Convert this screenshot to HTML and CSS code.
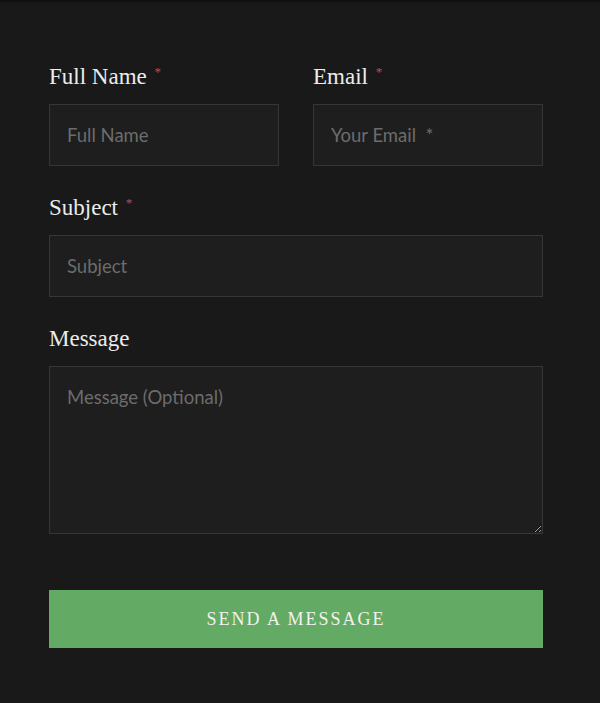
FILE: index.html
```html
<!DOCTYPE html>
<html>
<head>
<link rel="stylesheet" href="styles.css">
</head>
<body>

<form class="contact-form" action="#">
  <div class="row">
    <div class="field">
      <label for="fullname">Full Name <span class="req">*</span></label>
      <input type="text" id="fullname" name="fullname" placeholder="Full Name">
    </div>
    <div class="field">
      <label for="email">Email <span class="req">*</span></label>
      <input type="email" id="email" name="email" placeholder="Your Email  *">
    </div>
  </div>

  <div class="field">
    <label for="subject">Subject <span class="req">*</span></label>
    <input type="text" id="subject" name="subject" placeholder="Subject">
  </div>

  <div class="field">
    <label for="message">Message</label>
    <textarea id="message" name="message" placeholder="Message (Optional)"></textarea>
  </div>

  <button type="submit" class="send-btn">Send a Message</button>
</form>

</body>
</html>
```

FILE: styles.css
```css
html, body {
  margin: 0;
  background: #191919;
}

body {
  box-shadow: inset 0 3px 3px -2px #0b0b0b;
  min-height: 703px;
}

.contact-form {
  padding: 63px 57px 0 49px;
  display: flex;
  flex-direction: column;
  gap: 28px;
}

.row {
  display: grid;
  grid-template-columns: 1fr 1fr;
  gap: 34px;
}

.field {
  display: flex;
  flex-direction: column;
}

.field label {
  font-family: "Liberation Serif", serif;
  font-size: 23px;
  line-height: 28px;
  height: 28px;
  color: #ececec;
  margin-bottom: 13px;
}

.req {
  color: #c4485a;
  font-size: 13px;
  line-height: 0;
  vertical-align: 8px;
  margin-left: 2px;
}

input[type=text], input[type=email], textarea {
  box-sizing: border-box;
  width: 100%;
  height: 62px;
  padding: 0 17px;
  margin: 0;
  background: #1e1e1e;
  border: 1px solid #363636;
  color: #ddd;
  font-family: "Lato", sans-serif;
  font-size: 18.5px;
  outline: none;
}

textarea {
  height: 168px;
  padding-top: 19px;
  resize: vertical;
}

input::placeholder, textarea::placeholder {
  color: #6c6c6c;
}

.send-btn {
  margin-top: 28px;
  height: 58px;
  border: none;
  background: #63ab64;
  color: #f1f1f1;
  font-family: "Liberation Serif", serif;
  font-size: 18px;
  letter-spacing: 2px;
  text-transform: uppercase;
  cursor: pointer;
}
```
